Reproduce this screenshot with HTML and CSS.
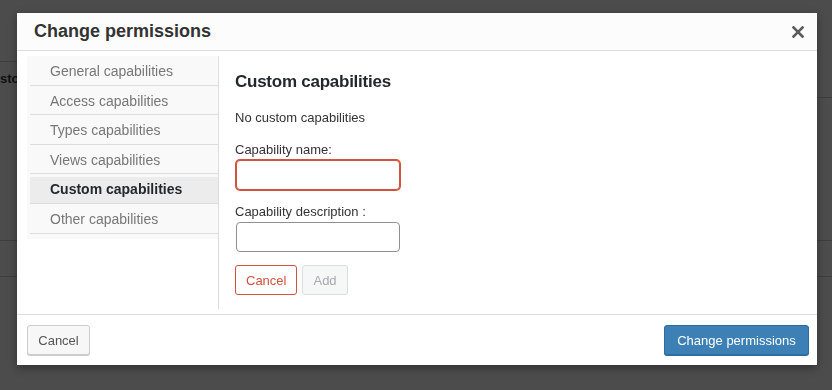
FILE: index.html
```html
<!DOCTYPE html>
<html lang="en">
<head>
  <meta charset="UTF-8" />
  <meta name="viewport" content="width=device-width, initial-scale=1.0" />
  <title>Change permissions</title>
  <link rel="stylesheet" href="styles.css">
</head>
<body>
  <div class="page">
    <div class="page-col page-left">
      <div class="row row-top"></div>
      <div class="row row-main"><span class="cell-name">stom role</span></div>
      <div class="row row-foot"></div>
    </div>
    <div class="page-col page-right">
      <div class="row row-top-r"></div>
      <div class="row row-main-r"></div>
      <div class="row row-foot"></div>
    </div>
  </div>

  <div class="modal">
    <div class="modal-header">
      <h1>Change permissions</h1>
      <button class="close" title="Close">
        <svg width="12" height="12" viewBox="0 0 12 12">
          <path d="M1.5 1.5 L10.5 10.5 M10.5 1.5 L1.5 10.5" stroke="#5c5c5c" stroke-width="2.6" stroke-linecap="square" fill="none"/>
        </svg>
      </button>
    </div>

    <div class="modal-body">
      <div class="nav-col">
        <ul class="nav">
          <li><a href="#">General capabilities</a></li>
          <li><a href="#">Access capabilities</a></li>
          <li><a href="#">Types capabilities</a></li>
          <li><a href="#">Views capabilities</a></li>
          <li class="active"><a href="#">Custom capabilities</a></li>
          <li><a href="#">Other capabilities</a></li>
        </ul>
      </div>

      <div class="content">
        <h2>Custom capabilities</h2>
        <p class="empty">No custom capabilities</p>

        <label for="cap-name">Capability name:</label>
        <input type="text" id="cap-name" class="invalid">

        <label for="cap-desc" class="second">Capability description :</label>
        <input type="text" id="cap-desc">

        <div class="actions">
          <button class="btn btn-danger">Cancel</button>
          <button class="btn btn-disabled" disabled>Add</button>
        </div>
      </div>
    </div>

    <div class="modal-footer">
      <button class="btn btn-default">Cancel</button>
      <button class="btn btn-primary">Change permissions</button>
    </div>
  </div>
</body>
</html>
```

FILE: styles.css
```css
body {
  font-family: "Liberation Sans", Arial, sans-serif;
  font-size: 13px;
  background: #4c4c4c;
  margin: 0;
  height: 390px;
  overflow: hidden;
}
.page {
  display: flex;
}
.page-left {
  width: 400px;
}
.page-right {
  flex: 1;
}
.row {
  border-bottom: 1px solid #3e3e3e;
  box-sizing: border-box;
}
.row-top {
  height: 62px;
}
.row-main {
  height: 179px;
  padding-top: 9px;
}
.row-top-r {
  height: 98px;
}
.row-main-r {
  height: 143px;
}
.row-foot {
  height: 36px;
}
.cell-name {
  font-weight: bold;
  color: #111;
}

.modal {
  position: fixed;
  top: 13px;
  left: 17px;
  width: 800px;
  background: white;
  box-shadow: 0 3px 8px rgba(0, 0, 0, 0.35);
}
.modal-header {
  display: flex;
  align-items: center;
  justify-content: space-between;
  height: 37px;
  padding: 0 13px 0 17px;
  background: #fcfcfc;
  border-bottom: 1px solid #dddddd;
}
.modal-header h1 {
  margin: 0;
  font-size: 18px;
  line-height: 37px;
  color: #333;
}
.close {
  background: none;
  border: none;
  padding: 0;
  width: 12px;
  height: 12px;
  cursor: pointer;
  display: flex;
}

.modal-body {
  display: flex;
  padding: 5px 0 5px 10px;
}
.nav-col {
  width: 191px;
  border-right: 1px solid #dddddd;
}
.nav {
  list-style: none;
  margin: 0;
  padding: 0 0 5px 3px;
  background: #f9f9f9;
}
.nav li {
  padding-top: 3px;
  border-bottom: 1px solid #dddddd;
}
.nav a {
  display: block;
  padding: 3px 0 3px 20px;
  line-height: 19.6px;
  font-size: 14px;
  color: #777;
  text-decoration: none;
}
.nav .active a {
  background: #ececec;
  color: #23282d;
  font-weight: bold;
}

.content {
  flex: 1;
  display: flex;
  flex-direction: column;
  align-items: flex-start;
  padding: 16px 16px 14px 16px;
}
.content h2 {
  margin: 0;
  font-size: 17px;
  line-height: 20px;
  letter-spacing: -0.25px;
  color: #23282d;
}
.empty {
  margin: 17px 0 0 0;
  line-height: 18px;
  color: #333;
}
label {
  margin-top: 14px;
  line-height: 18px;
  color: #333;
}
label.second {
  margin-top: 13px;
}
input {
  box-sizing: border-box;
  width: 164px;
  height: 30px;
  margin: 1px 0 0 1px;
  padding: 0 8px;
  border: 1px solid #8c8f94;
  border-radius: 4px;
  font-family: inherit;
  font-size: 13px;
}
input.invalid {
  margin-top: 1px;
  border-color: #d0523f;
  box-shadow: 0 0 0 1px #d0523f;
}
input:focus {
  outline: none;
}

.actions {
  display: flex;
  gap: 5px;
  margin-top: 13px;
}
.btn {
  height: 30px;
  padding: 0 10px;
  font-family: inherit;
  font-size: 13px;
  border-radius: 3px;
  cursor: pointer;
}
.btn-danger {
  background: white;
  color: #d0523f;
  border: 1px solid #d0523f;
}
.btn-disabled {
  background: #f6f7f7;
  color: #a7aaad;
  border: 1px solid #dcdcde;
  cursor: default;
}

.modal-footer {
  display: flex;
  justify-content: space-between;
  padding: 10px 8px 10px 10px;
  border-top: 1px solid #dddddd;
}
.btn-default {
  width: 63px;
  background: #f7f7f7;
  color: #555;
  border: 1px solid #cccccc;
  box-shadow: 0 1px 0 #cccccc;
}
.btn-primary {
  width: 145px;
  background: #3d80b6;
  color: white;
  border: 1px solid #2f6c9f;
  box-shadow: 0 1px 0 #2f6c9f;
}
```
